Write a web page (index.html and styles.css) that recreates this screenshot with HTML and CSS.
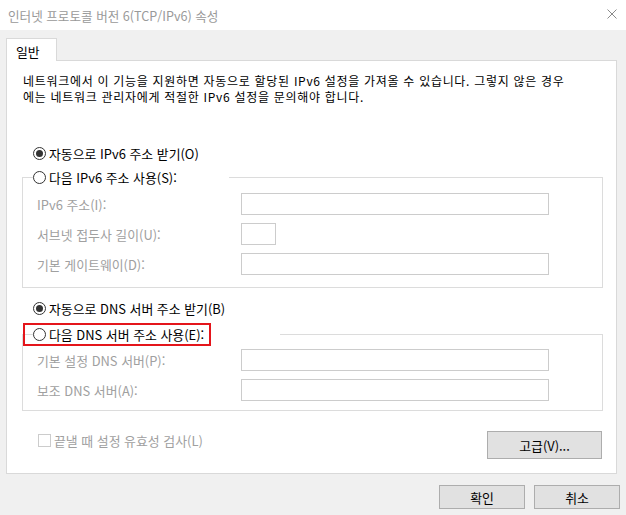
FILE: index.html
```html
<!DOCTYPE html>
<html lang="ko">
<head>
    <meta charset="UTF-8">
    <meta name="viewport" content="width=device-width, initial-scale=1.0">
    <title>인터넷 프로토콜 버전 6(TCP/IPv6) 속성</title>
    <link rel="stylesheet" href="styles.css">
</head>
<body>
    <div class="titlebar">
        <span class="title">인터넷 프로토콜 버전 6(TCP/IPv6) 속성</span>
        <svg class="close" width="10" height="10" viewBox="0 0 10 10">
            <path d="M0.5 0.5 L9.5 9.5 M9.5 0.5 L0.5 9.5" stroke="#8a8a8a" stroke-width="1" fill="none"/>
        </svg>
    </div>
    <div class="dialog">
        <div class="tabs">
            <div class="tab">일반</div>
        </div>
        <div class="panel">
            <p class="desc">네트워크에서 이 기능을 지원하면 자동으로 할당된 IPv6 설정을 가져올 수 있습니다. 그렇지 않은 경우<br>에는 네트워크 관리자에게 적절한 IPv6 설정을 문의해야 합니다.</p>

            <label class="radio-row first-radio"><span class="radio checked"></span>자동으로 IPv6 주소 받기(O)</label>
            <fieldset class="group group-ip">
                <legend class="legend-ip"><label class="radio-row"><span class="radio"></span>다음 IPv6 주소 사용(S):</label></legend>
                <div class="fields">
                    <span class="field-label">IPv6 주소(I):</span>
                    <span class="input wide"></span>
                    <span class="field-label">서브넷 접두사 길이(U):</span>
                    <span class="input short"></span>
                    <span class="field-label">기본 게이트웨이(D):</span>
                    <span class="input wide"></span>
                </div>
            </fieldset>

            <label class="radio-row dns-radio"><span class="radio checked"></span>자동으로 DNS 서버 주소 받기(B)</label>
            <fieldset class="group group-dns">
                <legend class="legend-dns"><label class="radio-row highlight"><span class="radio"></span>다음 DNS 서버 주소 사용(E):</label></legend>
                <div class="fields">
                    <span class="field-label">기본 설정 DNS 서버(P):</span>
                    <span class="input wide"></span>
                    <span class="field-label">보조 DNS 서버(A):</span>
                    <span class="input wide"></span>
                </div>
            </fieldset>

            <div class="footer-row">
                <label class="check-row"><span class="checkbox"></span>끝낼 때 설정 유효성 검사(L)</label>
                <button class="btn advanced">고급(V)...</button>
            </div>
        </div>
        <div class="actions">
            <button class="btn action">확인</button>
            <button class="btn action">취소</button>
        </div>
    </div>
</body>
</html>
```

FILE: styles.css
```css
body {
    margin: 0;
    background: #f0f0f0;
    font-family: "Noto Sans CJK KR", "Noto Sans", sans-serif;
    font-size: 12.9px;
    color: #000;
}
.titlebar {
    height: 30px;
    background: #fff;
    display: flex;
    align-items: center;
    justify-content: space-between;
    padding: 0 9px 0 8px;
}
.title {
    color: #999;
    font-size: 12.6px;
}
.close {
    display: block;
    margin-top: -2px;
}
.dialog {
    padding: 8px 9px 0 6px;
}
.tabs {
    display: flex;
}
.tab {
    position: relative;
    z-index: 1;
    width: 51px;
    height: 23px;
    box-sizing: border-box;
    margin-bottom: -1px;
    padding: 3px 0 0 9px;
    background: #fff;
    border: 1px solid #d9d9d9;
    border-bottom: none;
}
.panel {
    background: #fff;
    border: 1px solid #d9d9d9;
    padding: 12px 13px 14px 15px;
}
.desc {
    margin: 0;
    padding-left: 1px;
    font-size: 12px;
    line-height: 16px;
    letter-spacing: 0.7px;
}
.radio-row {
    display: flex;
    align-items: center;
    height: 16px;
    gap: 3px;
    white-space: nowrap;
}
.first-radio {
    margin: 40px 0 0 11px;
}
.dns-radio {
    margin: 12px 0 0 11px;
}
.radio {
    width: 13px;
    height: 13px;
    box-sizing: border-box;
    border: 1px solid #333;
    border-radius: 50%;
    background: #fff;
    display: flex;
    align-items: center;
    justify-content: center;
}
.radio.checked::after {
    content: "";
    width: 7px;
    height: 7px;
    border-radius: 50%;
    background: #333;
}
.group {
    margin: 0;
    border: 1px solid #dcdcdc;
    padding: 0 0 0 10px;
}
.group legend {
    padding: 0;
}
.legend-ip {
    padding-right: 52px !important;
}
.legend-dns {
    padding-right: 76px !important;
}
.group-ip {
    margin-top: 8px;
    padding-top: 8px;
    padding-bottom: 12px;
}
.group-dns {
    margin-top: 10px;
    padding-top: 7px;
    padding-bottom: 9px;
}
.highlight {
    position: relative;
}
.highlight::after {
    content: "";
    position: absolute;
    top: -3px;
    bottom: -4px;
    left: -10px;
    right: -7px;
    border: 2px solid #e4151b;
}
.fields {
    display: grid;
    grid-template-columns: 204px 308px;
    row-gap: 8px;
    margin-left: 4px;
    align-items: center;
}
.field-label {
    color: #a0a0a0;
}
.input {
    display: block;
    height: 22px;
    box-sizing: border-box;
    border: 1px solid #cccccc;
    background: #fff;
}
.input.wide {
    width: 308px;
}
.input.short {
    width: 35px;
}
.footer-row {
    display: flex;
    justify-content: space-between;
    align-items: center;
    margin-top: 20px;
    padding: 0 1px 0 16px;
}
.check-row {
    display: flex;
    align-items: center;
    gap: 3px;
    color: #a0a0a0;
    margin-top: -10px;
}
.checkbox {
    width: 13px;
    height: 13px;
    box-sizing: border-box;
    border: 1px solid #cccccc;
    background: #fff;
}
.btn {
    font-family: inherit;
    font-size: 12.9px;
    color: #000;
    background: #e1e1e1;
    border: 1px solid #adadad;
    padding: 0;
}
.advanced {
    width: 115px;
    height: 28px;
}
.actions {
    display: flex;
    justify-content: flex-end;
    gap: 9px;
    margin-top: 11px;
    margin-right: -3px;
}
.action {
    width: 86px;
    height: 24px;
}
```
